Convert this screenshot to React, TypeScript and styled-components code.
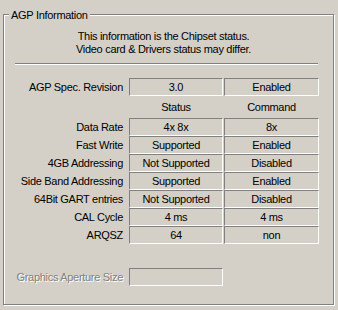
import React from "react";
import styled, { createGlobalStyle } from "styled-components";

interface Row {
  label: string;
  status: string;
  command: string;
}

const rows: Row[] = [
  { label: "Data Rate", status: "4x 8x", command: "8x" },
  { label: "Fast Write", status: "Supported", command: "Enabled" },
  { label: "4GB Addressing", status: "Not Supported", command: "Disabled" },
  { label: "Side Band Addressing", status: "Supported", command: "Enabled" },
  { label: "64Bit GART entries", status: "Not Supported", command: "Disabled" },
  { label: "CAL Cycle", status: "4 ms", command: "4 ms" },
  { label: "ARQSZ", status: "64", command: "non" },
];

const App: React.FC = () => {
  return (
    <>
      <GlobalStyle />
      <Page>
        <GroupBox>
          <Caption>AGP Information</Caption>
          <Notice>
            This information is the Chipset status.
            <br />
            Video card &amp; Drivers status may differ.
          </Notice>
          <Separator />
          <Grid>
            <Label>AGP Spec. Revision</Label>
            <Cell>3.0</Cell>
            <Cell>Enabled</Cell>

            <div />
            <Header>Status</Header>
            <Header>Command</Header>

            {rows.map((r) => (
              <React.Fragment key={r.label}>
                <Label>{r.label}</Label>
                <Cell>{r.status}</Cell>
                <Cell>{r.command}</Cell>
              </React.Fragment>
            ))}
          </Grid>
          <ApertureRow>
            <Label $disabled>Graphics Aperture Size</Label>
            <Cell />
          </ApertureRow>
        </GroupBox>
      </Page>
    </>
  );
};

export default App;

const GlobalStyle = createGlobalStyle`
  html, body {
    margin: 0;
    padding: 0;
    background: #d4d0c8;
  }
  body {
    font-family: "Liberation Sans", Arial, sans-serif;
    font-size: 11px;
    letter-spacing: -0.3px;
    color: #000;
  }
`;

const Page = styled.div`
  width: 338px;
  height: 310px;
  padding: 14px 0 0 3px;
  box-sizing: border-box;
  background: #d4d0c8;
`;

const GroupBox = styled.div`
  position: relative;
  width: 331px;
  height: 291px;
  box-sizing: border-box;
  border: 1px solid #808080;
  box-shadow: inset 1px 1px 0 #fff, 1px 1px 0 #fff;
`;

const Caption = styled.div`
  position: absolute;
  left: 5px;
  top: -6px;
  padding: 0 2px 0 2px;
  line-height: 13px;
  background: #d4d0c8;
  white-space: nowrap;
`;

const Notice = styled.div`
  margin-top: 15px;
  padding-right: 10px;
  line-height: 13px;
  text-align: center;
`;

const Separator = styled.div`
  margin: 7px 0 0 11px;
  width: 303px;
  border-top: 1px solid #808080;
  border-bottom: 1px solid #fff;
`;

const Grid = styled.div`
  margin-top: 13px;
  display: grid;
  grid-template-columns: 124px 94px 95px;
  column-gap: 1px;
`;

const Label = styled.div<{ $disabled?: boolean }>`
  height: 18px;
  padding-right: 5px;
  text-align: right;
  line-height: 18px;
  white-space: nowrap;
  color: ${({ $disabled }) => ($disabled ? "#808080" : "#000")};
  text-shadow: ${({ $disabled }) => ($disabled ? "1px 1px 0 #fff" : "none")};
`;

const Cell = styled.div`
  box-sizing: border-box;
  height: 18px;
  border-top: 1px solid #808080;
  border-left: 1px solid #808080;
  border-bottom: 1px solid #fff;
  border-right: 1px solid #fff;
  line-height: 16px;
  text-align: center;
  white-space: nowrap;
  overflow: hidden;
`;

const Header = styled.div`
  height: 22px;
  padding-top: 1px;
  box-sizing: border-box;
  line-height: 21px;
  text-align: center;
`;

const ApertureRow = styled.div`
  margin-top: 24px;
  display: grid;
  grid-template-columns: 124px 94px;
  column-gap: 1px;
`;
